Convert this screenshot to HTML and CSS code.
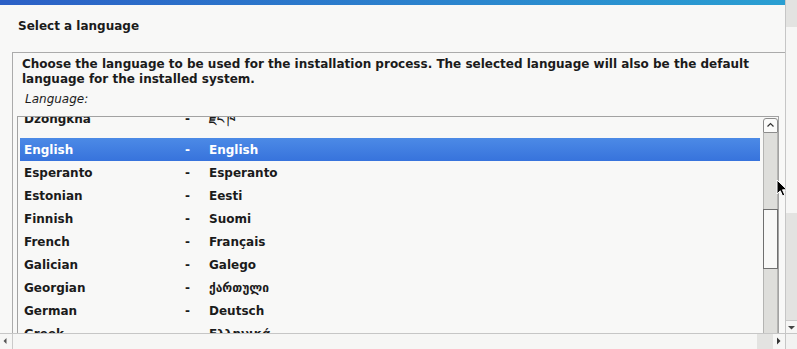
FILE: index.html
```html
<!DOCTYPE html>
<html lang="en">
<head>
<meta charset="UTF-8">
<meta name="viewport" content="width=device-width, initial-scale=1.0">
<title>Select a language</title>
<link rel="stylesheet" href="styles.css">
</head>
<body>

<div class="screen">
    <main class="pane">
        <div class="banner"><span>BY OFFENSIVE SECURITY</span></div>
        <h1 class="title">Select a language</h1>

        <section class="frame">
            <p class="intro">Choose the language to be used for the installation process. The selected language will also be the default language for the installed system.</p>
            <div class="field-label">Language:</div>

            <div class="listbox">
                <div class="list-view">
                    <div class="rows">
                        <div class="row tall"><span>Dzongkha</span><span>-</span><span lang="dz">རྫོང་ཁ</span></div>
                        <div class="row selected"><span>English</span><span>-</span><span>English</span></div>
                        <div class="row"><span>Esperanto</span><span>-</span><span>Esperanto</span></div>
                        <div class="row"><span>Estonian</span><span>-</span><span>Eesti</span></div>
                        <div class="row"><span>Finnish</span><span>-</span><span>Suomi</span></div>
                        <div class="row"><span>French</span><span>-</span><span>Français</span></div>
                        <div class="row"><span>Galician</span><span>-</span><span>Galego</span></div>
                        <div class="row"><span>Georgian</span><span>-</span><span lang="ka">ქართული</span></div>
                        <div class="row"><span>German</span><span>-</span><span>Deutsch</span></div>
                        <div class="row"><span>Greek</span><span>-</span><span lang="el">Ελληνικά</span></div>
                    </div>
                </div>

                <!-- list scrollbar -->
                <div class="vscroll">
                    <div class="vscroll-btn">
                        <svg width="13" height="13" viewBox="0 0 13 13"><polyline points="3.5,7.5 6.5,4.5 9.5,7.5" fill="none" stroke="#333" stroke-width="1.2"/></svg>
                    </div>
                    <div class="vscroll-track">
                        <div class="vscroll-thumb"></div>
                    </div>
                </div>
            </div>
        </section>
    </main>

    <!-- page scrollbars -->
    <div class="page-vscroll">
        <div class="pv-top"></div>
        <div class="pv-thumb"></div>
        <div class="pv-rest"></div>
        <div class="pv-btn">
            <svg width="11" height="12" viewBox="0 0 11 12"><polygon points="2,5 9,5 5.5,8.5" fill="#444"/></svg>
        </div>
    </div>

    <div class="page-hscroll">
        <div class="ph-btn ph-left">
            <svg width="12" height="15" viewBox="0 0 12 15"><polygon points="6.5,4 6.5,10 3.5,7" fill="#555"/></svg>
        </div>
        <div class="ph-thumb"></div>
        <div class="ph-trough"></div>
        <div class="ph-btn ph-right">
            <svg width="12" height="15" viewBox="0 0 12 15"><polygon points="4,3.5 4,10.5 7.5,7" fill="#333"/></svg>
        </div>
    </div>
    <div class="corner"></div>

    <svg class="cursor" width="12" height="18" viewBox="0 0 12 18">
        <path d="M1,1 L1,15 L4.3,11.8 L6.6,17 L8.8,16 L6.5,10.8 L11,10.8 Z" fill="#000" stroke="#fff" stroke-width="1"/>
    </svg>
</div>

</body>
</html>
```

FILE: styles.css
```css
/* Basic reset */
* {
    box-sizing: border-box;
}

body {
    margin: 0;
    background-color: #f8f8f7;
    font-family: "DejaVu Sans", "Noto Sans", sans-serif;
    font-size: 12px;
    color: #1b1b1b;
}

/* Whole window: content, page scrollbars, corner */
.screen {
    position: relative;
    display: grid;
    grid-template-columns: 785px 12px;
    grid-template-rows: 333px 16px;
    width: 797px;
    height: 349px;
    overflow: hidden;
}

.pane {
    display: flex;
    flex-direction: column;
    overflow: hidden;
}

/* Top banner, mostly scrolled out of view */
.banner {
    flex: none;
    height: 5px;
    display: flex;
    justify-content: center;
    align-items: flex-end;
    overflow: hidden;
    background: linear-gradient(to right, #2c60c6, #2b86ce 60%, #2a9fd2);
}

.banner span {
    margin-bottom: 3px;
    color: #fff;
    font-size: 8px;
    line-height: 8px;
    font-weight: bold;
    letter-spacing: 2px;
}

.title {
    flex: none;
    height: 47px;
    margin: 0;
    padding: 13px 0 0 18px;
    font-size: 12px;
    line-height: 16px;
    font-weight: bold;
}

/* Question frame */
.frame {
    flex: 1;
    margin-left: 12px;
    padding: 4px 0 0 9px;
    border-left: 1px solid #ababab;
    border-top: 1px solid #ababab;
}

.intro {
    margin: 0;
    font-weight: bold;
    line-height: 15px;
}

.field-label {
    margin-top: 5px;
    padding-left: 3px;
    font-style: italic;
    line-height: 15px;
}

/* Language list */
.listbox {
    display: flex;
    gap: 3px;
    width: 762px;
    height: 240px;
    margin: 9px 0 0 -5px;
    padding-left: 2px;
    border: 1px solid #a2a2a2;
    background-color: #f8f8f7;
}

.list-view {
    width: 740px;
    overflow: hidden;
}

.rows {
    margin-top: -8px;
}

.row {
    display: grid;
    grid-template-columns: 161px 24px 1fr;
    padding: 2px 0 0 4px;
    line-height: 21px;
    font-weight: bold;
    white-space: nowrap;
}

/* Tibetan script makes this row taller */
.row.tall {
    padding-top: 0;
    padding-bottom: 8px;
}

.row.selected {
    background: linear-gradient(#4c8ae6, #3773dc);
    color: #fff;
}

/* List scrollbar */
.vscroll {
    width: 15px;
    display: flex;
    flex-direction: column;
    padding-top: 1px;
}

.vscroll-btn {
    flex: none;
    height: 15px;
    border: 1px solid #8c8c8c;
    border-radius: 3px 3px 0 0;
    background-color: #fbfbfa;
}

.vscroll-btn svg {
    display: block;
}

.vscroll-track {
    flex: 1;
    padding-top: 76px;
    border-left: 1px solid #b4b4b2;
    border-right: 1px solid #b4b4b2;
    background-color: #dededb;
}

.vscroll-thumb {
    height: 60px;
    margin: 0 -1px;
    border: 1px solid #6f6f6f;
    background-color: #f8f8f7;
}

/* Page scrollbars */
.page-vscroll {
    display: flex;
    flex-direction: column;
    border-left: 1px solid #c6c6c6;
    background-color: #e3e3e1;
}

.pv-top {
    height: 27px;
}

.pv-thumb {
    height: 186px;
    background-color: #f6f6f5;
}

.pv-rest {
    flex: 1;
}

.pv-btn {
    height: 13px;
    border-top: 1px solid #cacaca;
    background-color: #f6f6f5;
}

.pv-btn svg,
.ph-btn svg {
    display: block;
}

.page-hscroll {
    display: flex;
    border-top: 1px solid #c6c6c6;
    background-color: #f6f6f5;
}

.ph-left {
    width: 13px;
    border-right: 1px solid #cacaca;
}

.ph-thumb {
    flex: 1;
}

.ph-trough {
    width: 16px;
    background-color: #e3e3e1;
}

.ph-right {
    width: 12px;
}

.corner {
    border-left: 1px solid #c6c6c6;
    border-top: 1px solid #c6c6c6;
    background-color: #f2f2f1;
}

/* Mouse pointer over the scrollbar */
.cursor {
    position: absolute;
    left: 776px;
    top: 179px;
}
```
